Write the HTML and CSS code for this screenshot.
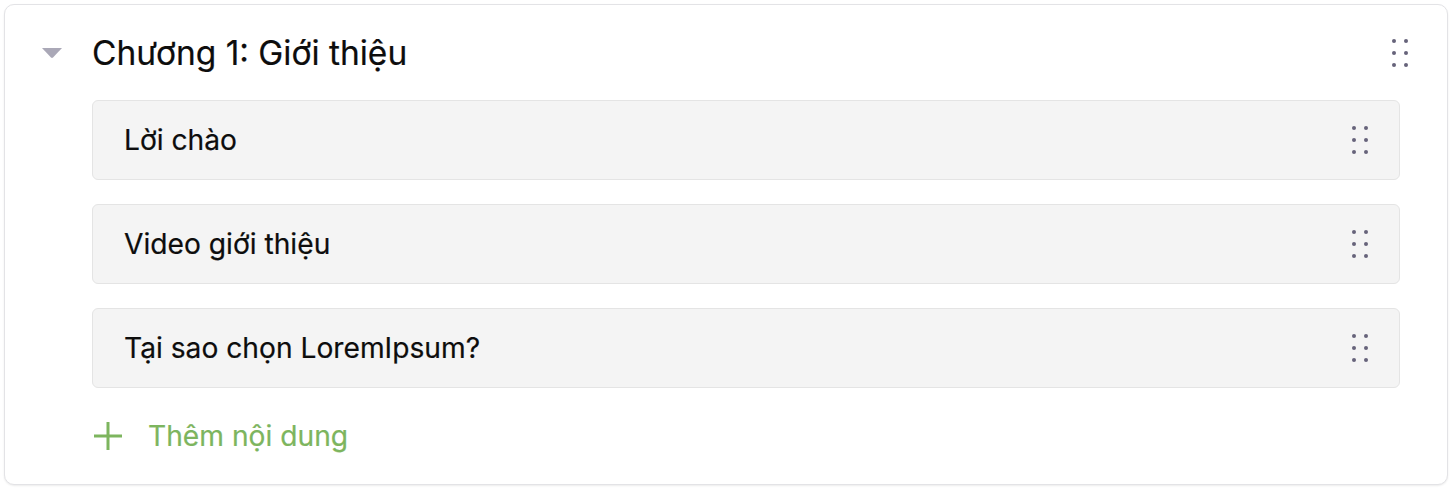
FILE: index.html
```html
<!DOCTYPE html>
<html lang="vi">
<head>
<meta charset="utf-8">
<link rel="stylesheet" href="styles.css">
</head>
<body>
<div class="card">
  <div class="header">
    <svg class="caret" width="20" height="10" viewBox="0 0 20 10"><path d="M0 0 H20 L11 9.5 Q10 10.3 9 9.5 Z" fill="#aaa8b7"/></svg>
    <div class="title">Chương 1: Giới thiệu</div>
    <div class="dots">
      <span></span><span></span><span></span><span></span><span></span><span></span>
    </div>
  </div>
  <div class="list">
    <div class="item"><div class="item-text">Lời chào</div><div class="dots"><span></span><span></span><span></span><span></span><span></span><span></span></div></div>
    <div class="item"><div class="item-text">Video giới thiệu</div><div class="dots"><span></span><span></span><span></span><span></span><span></span><span></span></div></div>
    <div class="item"><div class="item-text">Tại sao chọn LoremIpsum?</div><div class="dots"><span></span><span></span><span></span><span></span><span></span><span></span></div></div>
    <div class="add">
      <svg class="plus" width="28" height="28" viewBox="0 0 28 28"><path d="M14 0 V28 M0 14 H28" stroke="#7db55e" stroke-width="3"/></svg>
      <span class="add-text">Thêm nội dung</span>
    </div>
  </div>
</div>
</body>
</html>
```
FILE: styles.css
```css
* { box-sizing: border-box; }
html, body { margin: 0; padding: 0; background: #ffffff; }
body { padding: 4px; font-family: Inter, "Noto Sans", sans-serif; color: #111111; }
.card {
  width: 1444px;
  height: 481px;
  border: 1px solid #e3e3e6;
  border-radius: 10px;
  box-shadow: 0 1px 2px rgba(0,0,0,0.08);
  background: #fff;
}
.header {
  height: 95px;
  display: flex;
  align-items: center;
  padding-left: 37px;
  padding-right: 39px;
}
.title {
  margin-left: 30px;
  font-size: 33.5px;
  font-weight: 400;
  flex: 1;
  color: #0d0d0d;
  -webkit-text-stroke: 0.2px #0d0d0d;
}
.dots {
  display: grid;
  grid-template-columns: 4px 4px;
  column-gap: 8px;
  row-gap: 8px;
}
.dots span {
  width: 4px; height: 4px; border-radius: 50%;
  background: #66637a;
}
.list {
  padding-left: 87px;
  padding-right: 47px;
  display: flex;
  flex-direction: column;
  gap: 24px;
}
.item {
  height: 80px;
  background: #f4f4f4;
  border: 1px solid #e4e4e4;
  border-radius: 6px;
  display: flex;
  align-items: center;
  padding-left: 31px;
  padding-right: 31px;
}
.item-text { flex: 1; font-size: 28.2px; color: #0d0d0d; -webkit-text-stroke: 0.2px #0d0d0d; }
.add {
  display: flex;
  align-items: center;
  height: 48px;
  padding-left: 2px;
}
.plus { display: block; }
.add-text { margin-left: 26px; font-size: 28.2px; color: #7db55e; -webkit-text-stroke: 0.2px #7db55e; }
```
